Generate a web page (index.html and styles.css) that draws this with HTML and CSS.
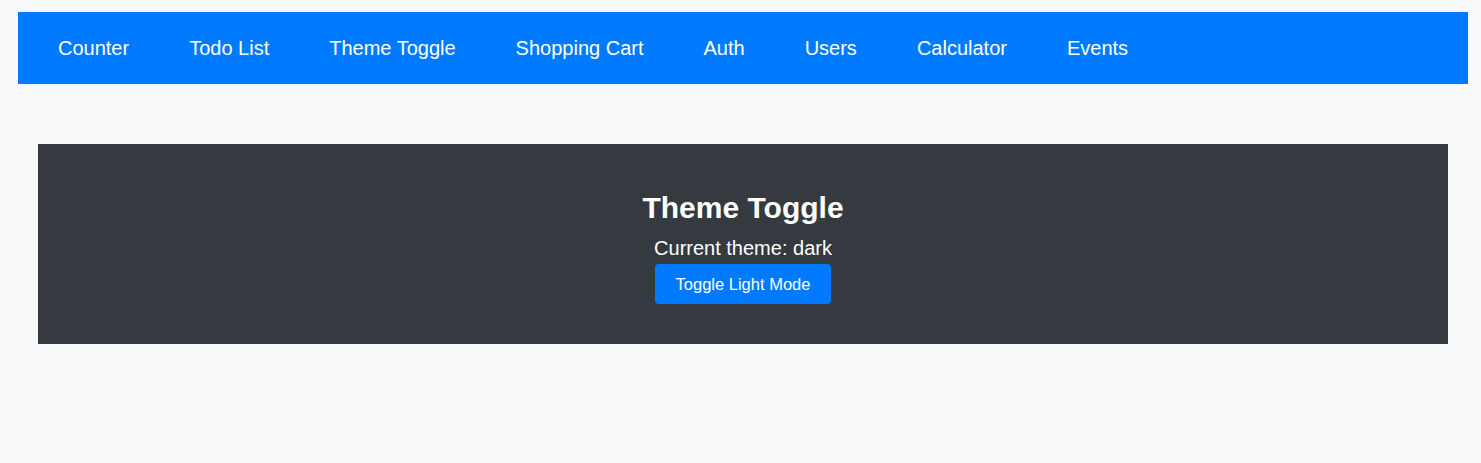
FILE: index.html
```html
<!DOCTYPE html>
<html lang="en">
<head>
<meta charset="utf-8">
<title>Theme Toggle</title>
<link rel="stylesheet" href="styles.css">
</head>
<body>
<div class="app">
  <nav class="navbar">
    <a class="nav-link" href="#">Counter</a>
    <a class="nav-link" href="#">Todo List</a>
    <a class="nav-link" href="#">Theme Toggle</a>
    <a class="nav-link" href="#">Shopping Cart</a>
    <a class="nav-link" href="#">Auth</a>
    <a class="nav-link" href="#">Users</a>
    <a class="nav-link" href="#">Calculator</a>
    <a class="nav-link" href="#">Events</a>
  </nav>
  <main class="content">
    <section class="theme-panel">
      <h2 class="theme-title">Theme Toggle</h2>
      <p class="theme-text">Current theme: dark</p>
      <button class="theme-button" type="button">Toggle Light Mode</button>
    </section>
  </main>
</div>
</body>
</html>
```

FILE: styles.css
```css
* {
  box-sizing: border-box;
}

html, body {
  margin: 0;
  padding: 0;
}

body {
  background: #f8f9fa;
  font-family: "Liberation Sans", Arial, sans-serif;
  min-height: 463px;
}

.app {
  padding: 12px 13px 0 18px;
}

.navbar {
  display: flex;
  align-items: center;
  gap: 60px;
  height: 72px;
  padding: 0 40px;
  background: #007bff;
}

.nav-link {
  color: #ffffff;
  text-decoration: none;
  font-size: 20px;
  line-height: 23px;
}

.content {
  padding: 60px 20px 0 20px;
}

.theme-panel {
  display: flex;
  flex-direction: column;
  align-items: center;
  height: 200px;
  padding-top: 47px;
  background: #343a40;
  color: #ffffff;
}

.theme-title {
  margin: 0;
  font-size: 30px;
  line-height: 34px;
  font-weight: bold;
}

.theme-text {
  margin: 12px 0 0 0;
  font-size: 20px;
  line-height: 23px;
}

.theme-button {
  margin-top: 4px;
  width: 176px;
  height: 40px;
  padding: 0;
  border: none;
  border-radius: 4px;
  background: #007bff;
  color: #ffffff;
  font-family: "Liberation Sans", Arial, sans-serif;
  font-size: 16.5px;
  cursor: pointer;
}
```
